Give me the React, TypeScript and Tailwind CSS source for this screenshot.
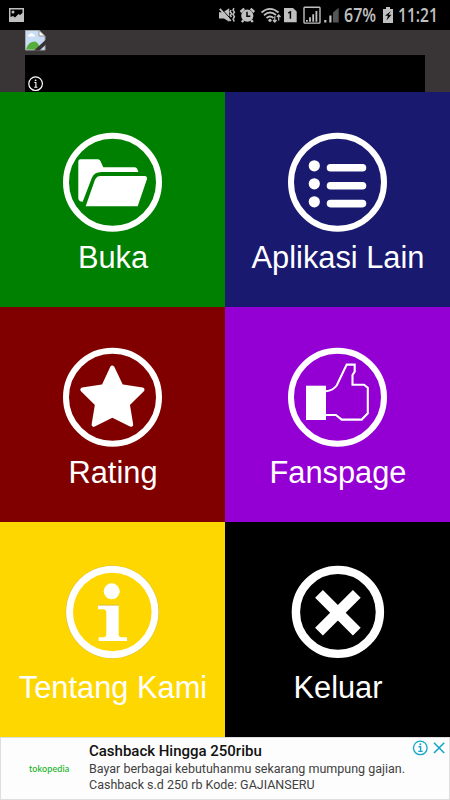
import type { ReactNode } from 'react';

const tiles: { label: string; color: string; icon: ReactNode }[] = [
  {
    label: 'Buka',
    color: 'bg-[#008000]',
    icon: (
      <>
        <circle cx="50" cy="50.2" r="46.5" fill="none" stroke="white" strokeWidth="6" />
        <path d="M15.8 29.5Q15.8 27.3 18 27.3H35.5Q37 27.3 37.8 28.8L40.8 35.3H72Q75 35.5 75.8 40H39Q31.5 40 29.2 46.3L20.2 69.7Q15.8 69.5 15.8 66Z" />
        <path d="M23.2 74.3L32.3 48.3Q34 44 38 44H82Q85 44 84.4 47.3L75.2 74.3Z" />
      </>
    ),
  },
  {
    label: 'Aplikasi Lain',
    color: 'bg-[#191970]',
    icon: (
      <>
        <circle cx="50" cy="50.2" r="46.5" fill="none" stroke="white" strokeWidth="6" />
        <circle cx="26.8" cy="33.8" r="5.6" />
        <circle cx="26.8" cy="51.8" r="5.6" />
        <circle cx="26.8" cy="69.8" r="5.6" />
        <path d="M43 35.8H75M43 53.7H75M43 71.6H75" stroke="white" strokeWidth="7.6" strokeLinecap="round" />
      </>
    ),
  },
  {
    label: 'Rating',
    color: 'bg-[#800000]',
    icon: (
      <>
        <circle cx="50" cy="50.2" r="46.5" fill="none" stroke="white" strokeWidth="6" />
        <path
          d="M49.8 20.8L58.6 39.3L79.8 42.7L65.1 57.2L68.5 77.6L49.8 68.3L31.3 77.6L34.7 57.2L20 42.7L41.2 39.3Z"
          stroke="white"
          strokeWidth="4.4"
          strokeLinejoin="round"
        />
      </>
    ),
  },
  {
    label: 'Fanspage',
    color: 'bg-[#9400d3]',
    icon: (
      <>
        <circle cx="50" cy="50.2" r="46.5" fill="none" stroke="white" strokeWidth="6" />
        <rect x="18.5" y="38.7" width="20" height="34.3" />
        <path
          d="M38.5 44.2Q45.5 43.5 49.2 38.5L59.2 17.6H67.2V24.7L65 28V37.7H76.5L80.3 40.8V66.3L74.2 72.6H54.2L48.4 68H38.5"
          fill="none"
          stroke="white"
          strokeWidth="2.1"
        />
      </>
    ),
  },
  {
    label: 'Tentang Kami',
    color: 'bg-[#ffd700]',
    icon: (
      <>
        <circle cx="49.8" cy="50" r="46.6" fill="#d3ad20" />
        <circle cx="49.8" cy="50" r="46.2" />
        <circle cx="49.8" cy="50" r="39.3" fill="#ffd700" />
        <circle cx="49.2" cy="29.3" r="8" />
        <path d="M35.5 43.3H56.2V72.5Q56.2 75 58.5 75.2H64.5V79H36.2V75.2H41.5Q43.8 75 43.8 72.5V50.5Q43.8 47.6 41 47.3H35.5Z" />
        <path d="M35.5 43.2H56.2" stroke="#c5a84b" strokeWidth="0.6" />
      </>
    ),
  },
  {
    label: 'Keluar',
    color: 'bg-black',
    icon: (
      <>
        <circle cx="50.4" cy="49.9" r="42" fill="none" stroke="white" strokeWidth="8.4" />
        <path d="M31.5 31.8L69.3 69.6M69.3 31.8L31.5 69.6" stroke="white" strokeWidth="11" />
      </>
    ),
  },
];

function StatusBar() {
  return (
    <div className="flex h-[30px] items-center bg-black font-['Open_Sans',sans-serif] font-semibold text-[#c0c0c0]">
      <svg width="15" height="14" viewBox="0 0 15 14" className="ml-[9px] shrink-0">
        <path fillRule="evenodd" fill="currentColor" d="M0 0H15V14H0ZM1.5 1.5V9L4 8L6 9.5L9.5 6L11 7L13.5 5V1.5Z" />
        <circle cx="4" cy="4" r="1.5" fill="currentColor" />
      </svg>

      {/* Sound, alarm, wifi, SIM and signal */}
      <svg width="124" height="30" viewBox="0 0 124 30" fill="none" stroke="currentColor" className="ml-[194px] shrink-0">
        <path d="M1 12.3H5L11.2 8.3V21.8L6 18.4H1Z" fill="currentColor" stroke="none" />
        <path d="M3 8.3L14 20.3" stroke="black" strokeWidth="1" />
        <path d="M1.8 8.8L12.8 21" strokeWidth="1.8" />
        <path d="M13 10L12.2 11.8L13.6 13.6L12.4 15.4L13.5 17M16 8.2L15 10L16.4 12.2L15 14.4L16.4 16.8L15.1 19L16.3 21.5" strokeWidth="1.5" />

        <circle cx="29.3" cy="15.7" r="6.1" fill="currentColor" stroke="none" />
        <path d="M22.5 12L26.2 8.7M32.6 8.7L36.3 12M25.5 20.2L23.8 22M33.2 20.2L34.9 22" strokeWidth="2.4" />
        <path d="M29 11.7V16.3H32.3" stroke="black" strokeWidth="1.5" />

        <path d="M43.5 12.5Q52 5.2 60.5 12.5M46 15.2Q52 10 58 15M48.5 18Q52 15 55.5 18" strokeWidth="1.8" />
        <circle cx="52" cy="20.3" r="1.6" fill="currentColor" stroke="none" />
        <path d="M56.8 16.3V22M55 20L56.8 22L58.6 20M60.7 20.5V15M58.9 17L60.7 15L62.5 17" strokeWidth="1.2" />

        <path d="M66 8H75L78.7 11.5V22.3H66Z" fill="currentColor" stroke="none" />
        <path d="M70.3 13L72.4 11.9V18.8" stroke="black" strokeWidth="1.5" />

        <rect x="86" y="7.3" width="16" height="15.8" rx="0.8" strokeWidth="1.4" />
        <path d="M88.9 21.8V20M92 21.8V17.3M95.2 21.8V14.2M98.4 21.8V11" strokeWidth="1.8" />

        <path d="M115 12.5L120.7 7.8V22.5H115Z" fill="#555555" stroke="none" />
        <path d="M107.3 22.5V20M112.4 22.5V15.5" strokeWidth="2.2" />
      </svg>

      <span className="ml-[2px] w-[34px] origin-left scale-x-[.84] text-[19px] leading-[30px]">67%</span>
      <svg width="10" height="16" viewBox="0 0 10 16" className="ml-[5px] shrink-0">
        <path d="M3 0H7V2H10V16H0V2H3Z" fill="currentColor" />
        <path d="M8 4L2 8.8H5L3.5 13.5L8.5 7.8H5.5Z" fill="black" />
      </svg>
      <span className="ml-[5px] w-[42px] origin-left scale-x-[.82] text-[19px] leading-[30px]">11:21</span>
    </div>
  );
}

function Header() {
  return (
    <div className="h-[62px] bg-[#393536] px-[25px]">
      <div className="h-[25px]">
        <svg width="21" height="21" viewBox="0 0 21 21">
          <path d="M.5 .5H14L20 6V20H.5Z" fill="#c9dcf5" stroke="#a8a8a8" />
          <path d="M3 6Q3 4 5 4Q6.5 2 8 4Q10 4.5 10 6.5H3Z" fill="white" />
          <path d="M1 19.5Q3 11.5 10 11.5Q14 12.5 15 19.5Z" fill="#57ad3b" />
          <path d="M14 .5V6H20Z" fill="white" stroke="#969696" />
          <path d="M21 9.5L9 20.5H14.5L21 14.5Z" fill="#393536" />
        </svg>
      </div>
      <div className="h-[37px] bg-black pt-[21px] pl-[3px]">
        <svg width="16" height="16" viewBox="0 0 16 16" fill="none" stroke="white">
          <circle cx="7.6" cy="7.7" r="6.8" strokeWidth="1.2" />
          <path d="M6.3 6.5H7.9V11.3M6.2 11.3H9.4" strokeWidth="1.1" />
          <circle cx="7.6" cy="4.3" r="0.9" fill="white" stroke="none" />
        </svg>
      </div>
    </div>
  );
}

function AdBanner() {
  return (
    <div className="flex h-[63px] border border-[#dedede] bg-[#fdfdfd] font-['Roboto',sans-serif]">
      <div className="flex w-[88px] shrink-0 items-center pl-[28px] font-['Lato',sans-serif] text-[9px] leading-none font-medium tracking-[.1px] text-[#12b01a]">
        <span>tokopedia</span>
      </div>
      <div className="min-w-0 grow whitespace-nowrap pt-[4px] text-[12.5px] leading-4 text-[#414141]">
        <div className="mb-px text-[15px] leading-[18px] font-medium tracking-[-.01px] text-[#111]">Cashback Hingga 250ribu</div>
        <p>Bayar berbagai kebutuhanmu sekarang mumpung gajian.</p>
        <p>Cashback s.d 250 rb Kode: GAJIANSERU</p>
      </div>
      <svg width="37" height="20" viewBox="0 0 37 20" fill="none" stroke="#14a6cb" className="mt-[2px] shrink-0">
        <circle cx="8.3" cy="7.9" r="6.8" strokeWidth="1.3" />
        <path d="M6.6 6.8H8.6V11.2M6.3 11.4H10.7" strokeWidth="1.4" />
        <circle cx="8.3" cy="4.2" r="1" fill="#14a6cb" stroke="none" />
        <path d="M22 2.8L32.2 13M32.2 2.8L22 13" strokeWidth="1.6" />
      </svg>
    </div>
  );
}

export default function App() {
  return (
    <div className="flex h-[800px] w-[450px] flex-col overflow-hidden bg-black">
      <StatusBar />
      <Header />

      {/* Menu */}
      <div className="grid grid-cols-2">
        {tiles.map((tile) => (
          <button key={tile.label} className={`flex h-[215px] flex-col items-center justify-start pt-10 ${tile.color}`}>
            <svg width="100" height="100" viewBox="0.5 0 100 100" fill="white" className="shrink-0 overflow-visible">
              {tile.icon}
            </svg>
            <span className="mt-2 whitespace-nowrap pl-px font-['Liberation_Sans',sans-serif] text-[30.8px] leading-9 text-white">
              {tile.label}
            </span>
          </button>
        ))}
      </div>

      <AdBanner />
    </div>
  );
}
